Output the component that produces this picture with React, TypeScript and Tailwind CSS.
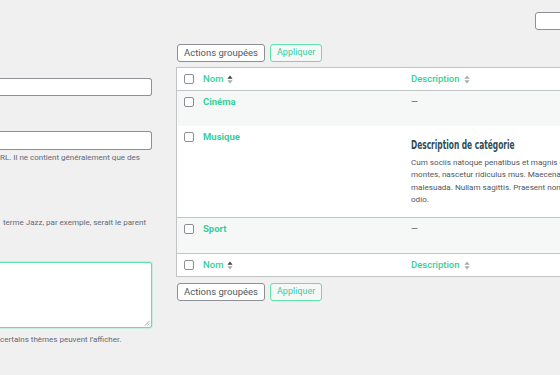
import React from "react";

const GREEN = "text-[#35cf9c]";

function Checkbox() {
  return <span className="block w-[10px] h-[10px] rounded-[2px] border border-[#8c8f94] bg-white" />;
}

function SortIcon({ active }: { active?: boolean }) {
  return (
    <svg width="6" height="9" viewBox="0 0 6 9" className="ml-[4px]">
      <path d="M3 0.5 L5.6 3.8 L0.4 3.8 Z" fill={active ? "#3c434a" : "#a7aaad"} />
      <path d="M3 8.5 L5.6 5.2 L0.4 5.2 Z" fill="#a7aaad" />
    </svg>
  );
}

function BulkActions() {
  return (
    <div className="flex items-center gap-[5px] whitespace-nowrap">
      <div className="h-[18px] w-[88px] flex items-center justify-between pl-[6px] pr-[5px] bg-white border border-[#8c8f94] rounded-[3px] text-[9.5px] text-[#50575e]">
        <span>Actions groupées</span>
        <svg width="8" height="6" viewBox="0 0 8 6">
          <path d="M1 1.5 L4 4.5 L7 1.5" stroke="#50575e" strokeWidth="1.3" fill="none" />
        </svg>
      </div>
      <div className={`h-[18px] px-[6px] flex items-center bg-[#f6f7f7] border border-[#5ee3a9] rounded-[3px] text-[9px] ${GREEN}`}>
        Appliquer
      </div>
    </div>
  );
}

function HeaderRow({ bottom }: { bottom?: boolean }) {
  return (
    <div className={`flex h-[23px] items-center bg-white ${bottom ? "border-t" : "border-b"} border-[#c3c4c7]`}>
      <div className="w-[26px] shrink-0 pl-[7px]"><Checkbox /></div>
      <div className={`w-[208px] shrink-0 flex items-center text-[9.5px] font-medium ${GREEN}`}>
        Nom<SortIcon active />
      </div>
      <div className={`flex-1 flex items-center text-[9.5px] font-medium ${GREEN}`}>
        Description<SortIcon />
      </div>
    </div>
  );
}

function DataRow({ name, alt, h, children }: { name: string; alt?: boolean; h: string; children: React.ReactNode }) {
  return (
    <div className={`flex items-start ${h} ${alt ? "bg-[#f6f7f7]" : "bg-white"}`}>
      <div className="w-[26px] shrink-0 pl-[7px] pt-[6px]"><Checkbox /></div>
      <div className={`w-[208px] shrink-0 pt-[5px] text-[9.5px] font-bold leading-[12px] ${GREEN}`}>{name}</div>
      <div className="flex-1 min-w-0 pt-[5px] text-[9px] leading-[12px] text-[#50575e]">{children}</div>
    </div>
  );
}

export default function App() {
  return (
    <div className="w-[560px] h-[375px] overflow-hidden bg-[#f0f0f1] flex" style={{ fontFamily: "Roboto, 'Liberation Sans', sans-serif" }}>
      <div className="w-[152px] shrink-0 pt-[78px] text-[8px] leading-[11px] text-[#646970] whitespace-nowrap">
        <div className="h-[18px] bg-white border border-l-0 border-[#8c8f94] rounded-r-[3px]" />
        <div className="mt-[35px] h-[19px] bg-white border border-l-0 border-[#8c8f94] rounded-r-[3px]" />
        <p className="mt-[2px]">RL. Il ne contient généralement que des</p>
        <p className="mt-[54px] pl-[3px]">terme Jazz, par exemple, serait le parent</p>
        <div className="mt-[34px] h-[66px] bg-white border-[1.5px] border-l-0 border-[#5fe3a4] rounded-r-[3px] relative shadow-[0_0_0_1px_rgba(95,227,164,0.25)]">
          <svg width="6" height="6" viewBox="0 0 6 6" className="absolute right-[1px] bottom-[1px]">
            <path d="M5.5 1 L1 5.5 M5.5 3.5 L3.5 5.5" stroke="#8c8f94" strokeWidth="0.8" />
          </svg>
        </div>
        <p className="mt-[6px]">certains thèmes peuvent l’afficher.</p>
      </div>

      <div className="ml-[24px] shrink-0 w-[420px] pt-[12px]">
        <div className="ml-[359px] h-[18px] w-[40px] bg-white border border-[#8c8f94] rounded-[3px]" />
        <div className="mt-[14px] ml-[1px]"><BulkActions /></div>
        <div className="mt-[5px] border border-[#c3c4c7] bg-white">
          <HeaderRow />
          <DataRow name="Cinéma" alt h="h-[35px]">—</DataRow>
          <DataRow name="Musique" h="h-[91px]">
            <h3
              className="mt-[7px] inline-block origin-left scale-x-[0.72] whitespace-nowrap text-[11.5px] leading-[14px] font-bold text-[#2f4d57]"
              style={{ fontFamily: "'DejaVu Sans Condensed', 'DejaVu Sans', sans-serif", fontStretch: "condensed" }}
            >
              Description de catégorie
            </h3>
            <div className="mt-[4px] text-[8.1px] leading-[12.4px] whitespace-nowrap overflow-hidden">
              <p>Cum sociis natoque penatibus et magnis dis parturient</p>
              <p>montes, nascetur ridiculus mus. Maecenas nec odio et ante</p>
              <p>malesuada. Nullam sagittis. Praesent nonummy mi in</p>
              <p>odio.</p>
            </div>
          </DataRow>
          <div className="border-t border-[#c3c4c7]" />
          <DataRow name="Sport" alt h="h-[35px]">—</DataRow>
          <HeaderRow bottom />
        </div>
        <div className="mt-[6px] ml-[1px]"><BulkActions /></div>
      </div>
    </div>
  );
}
